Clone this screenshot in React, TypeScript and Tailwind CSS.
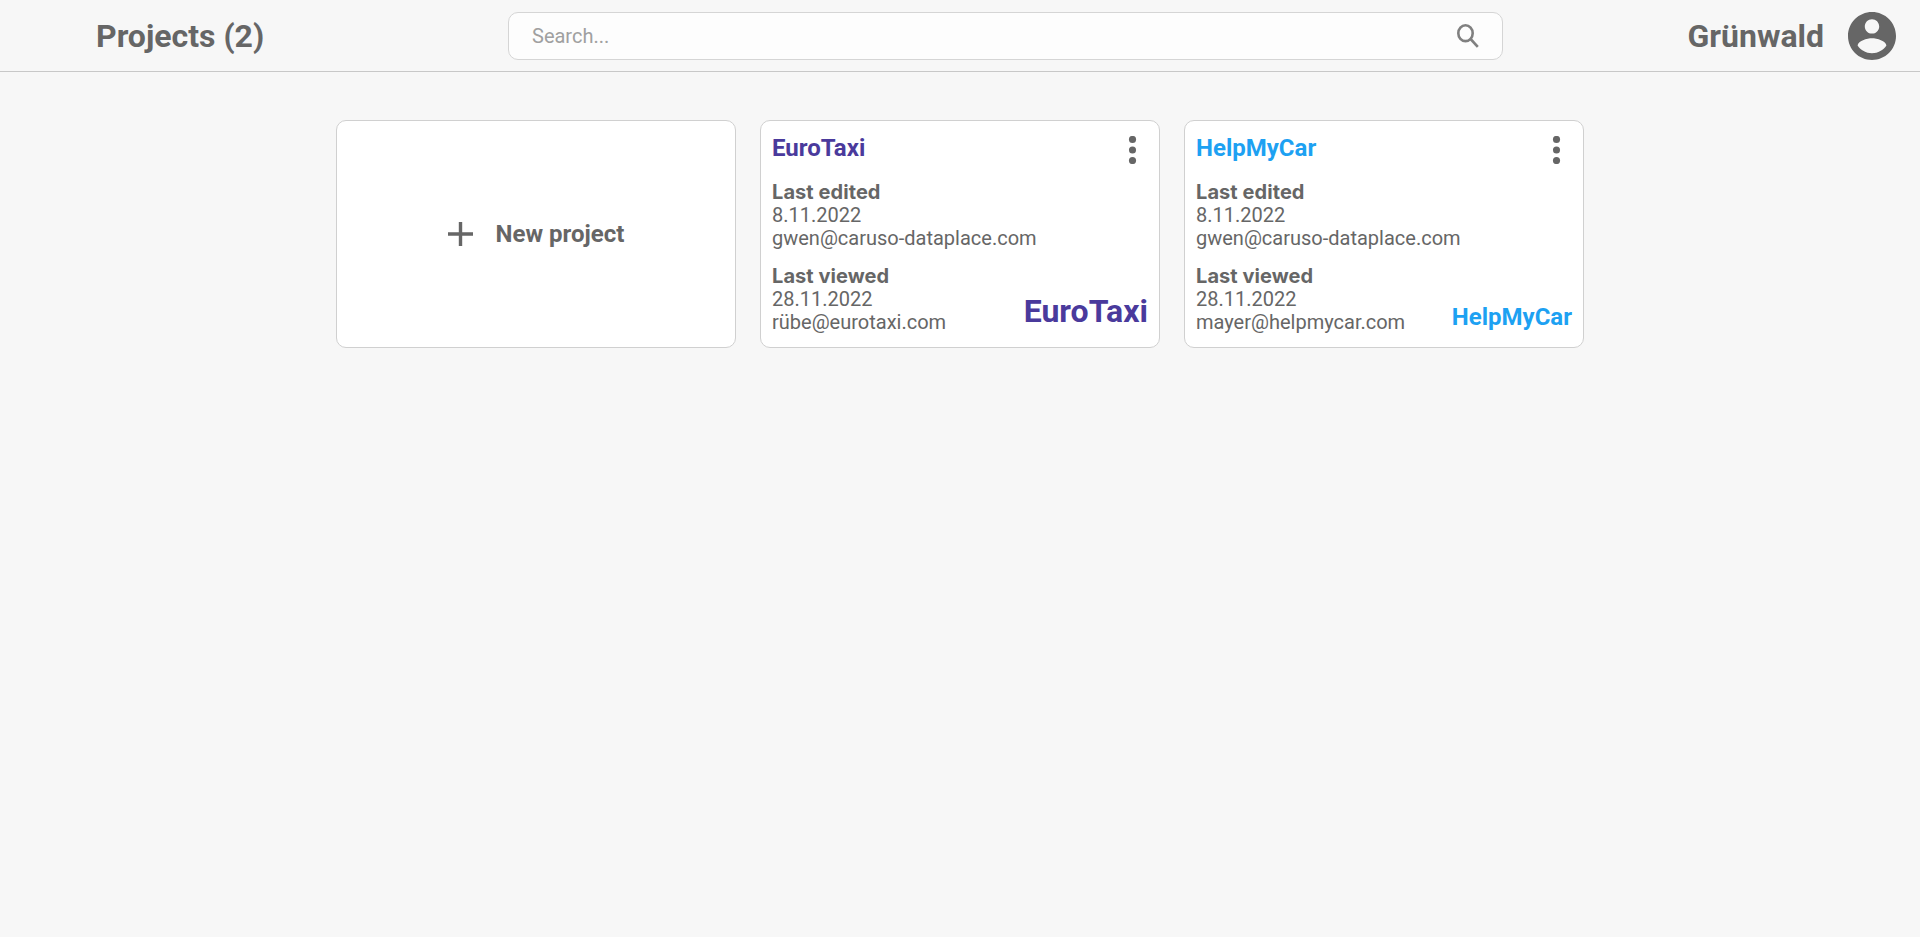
import React from "react";

type Project = {
  name: string;
  color: string;
  edited: [string, string];
  viewed: [string, string];
  logoClass: string;
};

const projects: Project[] = [
  {
    name: "EuroTaxi",
    color: "text-[#4a3a9c]",
    edited: ["8.11.2022", "gwen@caruso-dataplace.com"],
    viewed: ["28.11.2022", "rübe@eurotaxi.com"],
    logoClass: "mb-[4px] text-[32px] leading-[38px]",
  },
  {
    name: "HelpMyCar",
    color: "text-[#1da1f2]",
    edited: ["8.11.2022", "gwen@caruso-dataplace.com"],
    viewed: ["28.11.2022", "mayer@helpmycar.com"],
    logoClass: "mb-[3px] text-[24px] leading-[28px]",
  },
];

function SearchIcon() {
  return (
    <svg viewBox="0 0 22 24" fill="none" stroke="#808080" strokeWidth="2.6" className="h-6 w-[22px]">
      <ellipse cx="8.5" cy="9.2" rx="7.2" ry="7.9" />
      <path d="M13.6 15l7.2 7.9" />
    </svg>
  );
}

function AccountIcon() {
  return (
    <svg viewBox="2 2 20 20" fill="currentColor" className="size-12">
      <path d="M12 2C6.48 2 2 6.48 2 12s4.48 10 10 10 10-4.48 10-10S17.52 2 12 2zm0 3c1.66 0 3 1.34 3 3s-1.34 3-3 3-3-1.34-3-3 1.34-3 3-3zm0 14.2c-2.5 0-4.71-1.28-6-3.22.03-1.99 4-3.08 6-3.08 1.99 0 5.97 1.09 6 3.08-1.29 1.94-3.5 3.22-6 3.22z" />
    </svg>
  );
}

function PlusIcon() {
  return (
    <svg viewBox="0 0 25 24" fill="currentColor" className="h-6 w-[25px]">
      <path d="M10.8 0h3.4v10.3H25v3.4H14.2V24h-3.4V13.7H0v-3.4h10.8z" />
    </svg>
  );
}

function MoreIcon() {
  return (
    <svg viewBox="0 0 9 28" fill="currentColor" className="mt-[15px] mr-[11px] h-7 w-[9px]">
      <circle cx="4.5" cy="3.5" r="3.55" />
      <circle cx="4.5" cy="14" r="3.55" />
      <circle cx="4.5" cy="24.5" r="3.55" />
    </svg>
  );
}

function ProjectCard({ project }: { project: Project }) {
  return (
    <article className="flex h-[228px] w-[400px] flex-col rounded-[10px] border border-[#d0d0d0] bg-white px-[11px] text-[20px] leading-[23px]">
      <div className="flex h-[60px] items-start justify-between">
        <h2 className={"pt-[13px] text-[24px] leading-[28px] font-bold " + project.color}>{project.name}</h2>
        <MoreIcon />
      </div>
      <div>
        <p className="font-[Inter,sans-serif] font-bold tracking-[0.07px]">Last edited</p>
        <p>{project.edited[0]}</p>
        <p>{project.edited[1]}</p>
      </div>
      <div className="mt-[15px] flex items-end justify-between">
        <div>
          <p className="font-[Inter,sans-serif] font-bold tracking-[0.07px]">Last viewed</p>
          <p>{project.viewed[0]}</p>
          <p>{project.viewed[1]}</p>
        </div>
        <span className={"font-bold " + project.color + " " + project.logoClass}>{project.name}</span>
      </div>
    </article>
  );
}

export default function App() {
  return (
    <div className="min-h-screen bg-[#f7f7f7] font-[Roboto,sans-serif] text-[#666]">
      <header className="flex h-[72px] items-center border-b border-[#c8c8c8]">
        <h1 className="w-[508px] pl-[96px] text-[32px] leading-[38px] font-bold">Projects (2)</h1>
        <div className="flex h-12 w-[995px] items-center justify-between rounded-[10px] border border-[#d5d5d5] bg-[#fdfdfd] pr-[23px] pl-[23px]">
          <input
            placeholder="Search..."
            className="mt-px w-[600px] bg-transparent text-[20px] leading-[23px] outline-none placeholder:text-[#a0a0a0]"
          />
          <SearchIcon />
        </div>
        <div className="ml-auto flex items-center gap-6 pr-6">
          <span className="text-[32px] leading-[38px] font-bold">Grünwald</span>
          <AccountIcon />
        </div>
      </header>
      <main className="flex justify-center gap-6 pt-12">
        <button className="flex h-[228px] w-[400px] items-center justify-center gap-[23px] rounded-[10px] border border-[#d0d0d0] bg-white text-[24px] font-bold">
          <PlusIcon />
          New project
        </button>
        {projects.map((p) => (
          <ProjectCard key={p.name} project={p} />
        ))}
      </main>
    </div>
  );
}
